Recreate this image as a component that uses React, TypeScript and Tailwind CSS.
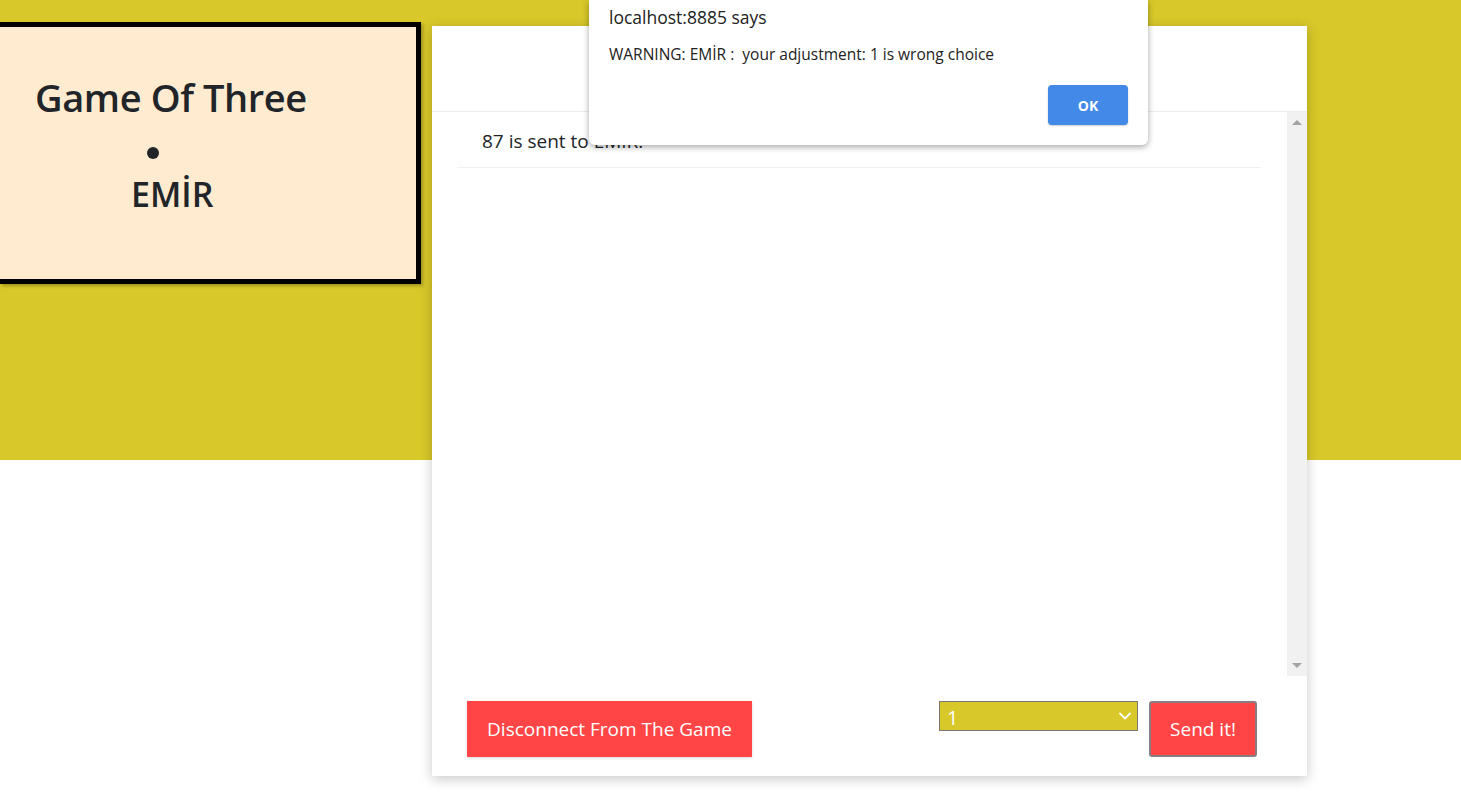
import { ChevronDown } from "lucide-react";

const font = { fontFamily: '"Open Sans", "Noto Sans", sans-serif' };

const PlayerCard = () => (
  <div className="mt-[22px] w-[421px] h-[262px] shrink-0 bg-[#ffebcf] border-[5px] border-l-0 border-black shadow-[2px_2px_3px_rgba(0,0,0,0.25)] flex flex-col items-start text-[#212529]">
    <h1 className="mt-[51px] ml-[35px] text-[38px] font-semibold leading-none tracking-[-0.4px] whitespace-nowrap">Game Of Three</h1>
    <span className="mt-[31px] ml-[147px] w-[12px] h-[12px] rounded-full bg-[#212529]" />
    <p className="mt-[18px] ml-[131px] text-[34px] font-semibold leading-none">EMİR</p>
  </div>
);

const Scrollbar = () => (
  <div className="w-[20px] bg-[#f1f1f1] flex flex-col justify-between items-center py-[8px]">
    <div className="w-0 h-0 border-l-[5px] border-r-[5px] border-b-[5px] border-l-transparent border-r-transparent border-b-[#a3a3a3]" />
    <div className="w-0 h-0 border-l-[5px] border-r-[5px] border-t-[5px] border-l-transparent border-r-transparent border-t-[#a3a3a3]" />
  </div>
);

const GamePanel = () => (
  <div className="mt-[26px] ml-[11px] w-[875px] h-[750px] bg-white shadow-[0_3px_12px_rgba(0,0,0,0.22)] flex flex-col">
    <div className="h-[86px] border-b border-[#ececec]" />
    <div className="h-[564px] flex">
      <ul className="flex-1 pl-[25px] pr-[26px]">
        <li className="h-[56px] pl-[25px] pt-[16px] border-b border-[#f0f0f0] text-[19px] text-[#212529] leading-[26px]">
          87 is sent to EMİR.
        </li>
      </ul>
      <Scrollbar />
    </div>
    <div className="flex-1 flex items-start justify-between pt-[25px] pl-[35px] pr-[50px]">
      <button className="h-[56px] w-[285px] bg-[#ff4545] text-white text-[19px] shadow-[0_1px_3px_rgba(0,0,0,0.15)]">
        Disconnect From The Game
      </button>
      <div className="flex items-start gap-[11px]">
        <div className="relative w-[199px] h-[30px] bg-[#d8c82a] border border-[#777] flex items-center px-[7px] pt-[3px] text-white text-[20px]">
          1
          <ChevronDown className="absolute right-[2px] top-[4px] w-[20px] h-[20px]" strokeWidth={2.2} />
        </div>
        <button className="w-[108px] h-[56px] bg-[#ff4545] border-2 border-[#8b7c80] rounded-[3px] text-white text-[19px]">
          Send it!
        </button>
      </div>
    </div>
  </div>
);

const AlertDialog = () => (
  <div className="absolute left-[589px] top-0 w-[559px] h-[145px] bg-white rounded-b-[6px] shadow-[0_2px_6px_rgba(0,0,0,0.35)] px-[20px] text-[#222]">
    <p className="pt-[5px] text-[17.5px] leading-[24px]">localhost:8885 says</p>
    <p className="mt-[15px] text-[15.5px] leading-[20px] whitespace-nowrap">WARNING: EMİR :&nbsp; your adjustment: 1 is wrong choice</p>
    <div className="flex justify-end mt-[21px]">
      <button className="w-[80px] h-[40px] rounded-[4px] bg-[#4289e8] text-white text-[14px] font-bold shadow-[0_1px_2px_rgba(0,0,0,0.2)]">
        OK
      </button>
    </div>
  </div>
);

export default function App() {
  return (
    <div
      style={font}
      className="relative w-[1461px] h-[807px] overflow-hidden bg-[linear-gradient(to_bottom,#d8c82a_460px,#ffffff_460px)]"
    >
      <div className="flex items-start">
        <PlayerCard />
        <GamePanel />
      </div>
      <AlertDialog />
    </div>
  );
}
